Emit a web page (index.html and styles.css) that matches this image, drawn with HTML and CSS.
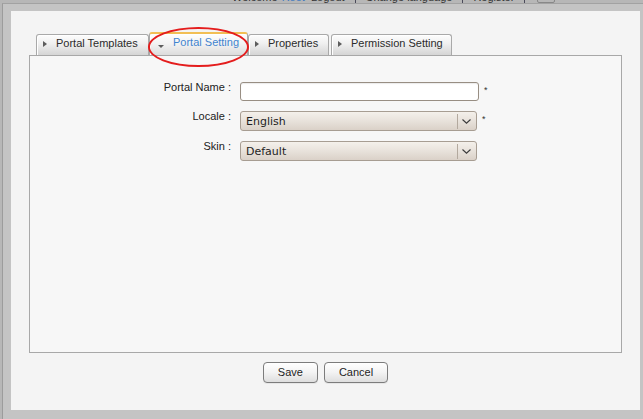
FILE: index.html
```html
<!DOCTYPE html>
<html>
<head>
<meta charset="utf-8">
<title>Portal Setting</title>
<link rel="stylesheet" href="styles.css">
</head>
<body>
<div class="topbar">
  <div class="topbar-line">
    <span class="tb-text">Welcome</span><span class="tb-user">Root</span>
    <span class="tb-text tb-link">Logout</span><span class="tb-sep"></span>
    <span class="tb-text tb-link">Change language</span><span class="tb-sep"></span>
    <span class="tb-text tb-link">Register</span><span class="tb-sep"></span>
    <span class="tb-search"></span>
  </div>
</div>
<div class="window">
  <div class="panel">
    <div class="tabs">
      <div class="tab tab-templates"><span class="arrow-r"></span>Portal Templates</div>
      <div class="tab tab-setting active"><span class="arrow-d"></span>Portal Setting</div>
      <div class="tab tab-properties"><span class="arrow-r"></span>Properties</div>
      <div class="tab tab-permission"><span class="arrow-r"></span>Permission Setting</div>
      <span class="highlight"></span>
    </div>
    <div class="content">
      <div class="form">
        <label class="label">Portal Name :</label>
        <div class="field"><input class="input" type="text"><span class="req">*</span></div>
        <label class="label">Locale :</label>
        <div class="field">
          <div class="select">
            <select class="select-el"><option>English</option></select>
            <span class="select-div"></span>
            <svg class="chev" width="9" height="5" viewBox="0 0 9 5"><path d="M0.5 0.5 L4.5 4.2 L8.5 0.5" fill="none" stroke="#3a3a3a" stroke-width="1.1"/></svg>
          </div>
          <span class="req">*</span>
        </div>
        <label class="label">Skin :</label>
        <div class="field">
          <div class="select">
            <select class="select-el"><option>Default</option></select>
            <span class="select-div"></span>
            <svg class="chev" width="9" height="5" viewBox="0 0 9 5"><path d="M0.5 0.5 L4.5 4.2 L8.5 0.5" fill="none" stroke="#3a3a3a" stroke-width="1.1"/></svg>
          </div>
        </div>
      </div>
    </div>
    <div class="actions">
      <button class="btn">Save</button>
      <button class="btn">Cancel</button>
    </div>
  </div>
</div>
</body>
</html>
```
FILE: styles.css
```css
* { box-sizing: border-box; }
html, body { margin: 0; padding: 0; }
body {
  background: #b7b7b7;
  font-family: "Liberation Sans", Arial, sans-serif;
  font-size: 11px;
  color: #222;
  width: 643px;
  height: 419px;
  overflow: hidden;
}

/* top bar (mostly hidden behind the dialog) */
.topbar {
  height: 3px;
  overflow: hidden;
  display: flex;
  align-items: flex-end;
  padding-left: 232px;
}
.topbar-line {
  display: flex;
  align-items: center;
  line-height: 11px;
  height: 11px;
  white-space: nowrap;
  color: #333;
}
.tb-user { color: #3a78c0; margin-left: 4px; margin-right: 6px; }
.tb-sep { width: 1px; height: 11px; background: #4a4a5a; margin: 0 10px; }
.tb-search { width: 18px; height: 11px; border: 1px solid #888; border-radius: 2px; margin-left: 2px; }

/* dialog window */
.window {
  margin-left: 2px;
  height: 416px;
  border-left: 1px solid #9c9c9c;
  border-top: 1px solid #a2a2a2;
  background: #c4c4c4;
  padding: 7px 3px 9px 8px;
}
.panel {
  height: 399px;
  background: #f4f4f4;
  padding: 21px 0 0 18px;
  display: flex;
  flex-direction: column;
}

/* tabs */
.tabs {
  position: relative;
  display: flex;
  align-items: flex-end;
  padding-left: 7px;
  height: 23px;
}
.tab {
  flex: none;
  height: 21px;
  border: 1px solid #a9a9a9;
  border-bottom: none;
  border-radius: 3px 3px 0 0;
  background: linear-gradient(#fdfdfd, #f1f1f1 40%, #d5d5d5);
  box-shadow: inset 1px 1px 0 #ffffff;
  display: flex;
  align-items: center;
  padding: 0 0 4px 6px;
  line-height: 13px;
  color: #2b2b2b;
  white-space: nowrap;
}
.tab-templates { width: 113px; }
.tab-setting { width: 99px; }
.tab-properties { width: 81px; margin-right: 2px; }
.tab-permission { width: 121px; }
.tab.active {
  height: 23px;
  border-top: 2px solid #f2bf55;
  background: linear-gradient(#fefefe, #f3f3f3 45%, #dcdcdc);
  color: #3f84cf;
  padding-left: 8px;
}
.arrow-r {
  width: 0; height: 0;
  border-left: 4px solid #5c5c5c;
  border-top: 3px solid transparent;
  border-bottom: 3px solid transparent;
  margin: 1px 9px 0 0;
}
.arrow-d {
  width: 0; height: 0;
  border-top: 3px solid #5c5c5c;
  border-left: 3px solid transparent;
  border-right: 3px solid transparent;
  margin: 7px 9px 0 0;
}
.highlight {
  position: absolute;
  left: 119px;
  top: -5px;
  width: 101px;
  height: 40px;
  border: 2px solid #e41d1d;
  border-radius: 50%;
  pointer-events: none;
}

/* content box */
.content {
  width: 593px;
  height: 298px;
  border: 1px solid #a8a8a8;
  background: #f7f7f7;
  padding-top: 26px;
}
.form {
  display: grid;
  grid-template-columns: 201px auto;
  column-gap: 9px;
  row-gap: 10px;
  align-items: start;
}
.label {
  text-align: right;
  line-height: 11px;
  color: #222;
}
.field {
  display: flex;
  align-items: flex-start;
}
.input {
  width: 239px;
  height: 19px;
  margin: 0;
  border: 1px solid #988e83;
  border-radius: 3px;
  background: #fff;
  box-shadow: inset 0 1px 1px rgba(0,0,0,0.08);
}
.req {
  font-size: 9px;
  line-height: 9px;
  margin-left: 5px;
  padding-top: 4px;
  color: #333;
}
.select {
  position: relative;
  width: 237px;
  height: 20px;
}
.select-el {
  -webkit-appearance: none;
  appearance: none;
  width: 100%;
  height: 100%;
  margin: 0;
  border: 1px solid #a79d92;
  border-radius: 3px;
  background: linear-gradient(#f4f0eb, #e8e2db 50%, #dad1c8);
  font-family: "DejaVu Sans", sans-serif;
  font-size: 11px;
  color: #1e1e1e;
  padding: 0 0 0 5px;
}
.select-div {
  position: absolute;
  right: 19px;
  top: 3px;
  bottom: 2px;
  width: 1px;
  background: #b3a99e;
}
.chev {
  position: absolute;
  right: 6px;
  top: 8px;
}

/* buttons */
.actions {
  width: 593px;
  display: flex;
  justify-content: center;
  gap: 6px;
  margin-top: 9px;
}
.btn {
  height: 21px;
  margin: 0;
  padding: 0 14px;
  border: 1px solid #7c7c7c;
  border-radius: 4px;
  background: linear-gradient(#ffffff, #f3f3f3 50%, #dedede);
  box-shadow: 0 1px 0 #e6e6e6;
  font-family: "Liberation Sans", Arial, sans-serif;
  font-size: 11px;
  color: #1e1e1e;
  line-height: 19px;
}
```
